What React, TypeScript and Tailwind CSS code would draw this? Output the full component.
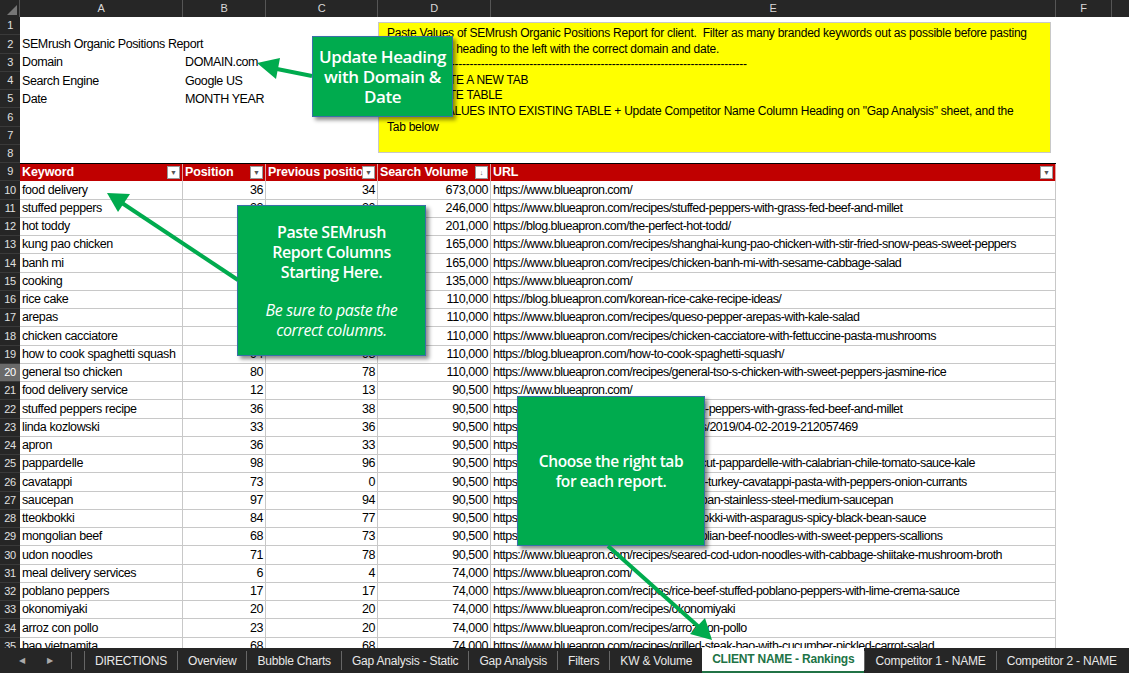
import React from "react";

const cols = [
  { l: "A", w: 163 },
  { l: "B", w: 83 },
  { l: "C", w: 112 },
  { l: "D", w: 113 },
  { l: "E", w: 565 },
  { l: "F", w: 56 },
];

const data: [string, string, string, string, string][] = [
  ["food delivery", "36", "34", "673,000", "https://www.blueapron.com/"],
  ["stuffed peppers", "22", "20", "246,000", "https://www.blueapron.com/recipes/stuffed-peppers-with-grass-fed-beef-and-millet"],
  ["hot toddy", "18", "17", "201,000", "https://blog.blueapron.com/the-perfect-hot-todd/"],
  ["kung pao chicken", "41", "39", "165,000", "https://www.blueapron.com/recipes/shanghai-kung-pao-chicken-with-stir-fried-snow-peas-sweet-peppers"],
  ["banh mi", "52", "48", "165,000", "https://www.blueapron.com/recipes/chicken-banh-mi-with-sesame-cabbage-salad"],
  ["cooking", "60", "58", "135,000", "https://www.blueapron.com/"],
  ["rice cake", "27", "25", "110,000", "https://blog.blueapron.com/korean-rice-cake-recipe-ideas/"],
  ["arepas", "44", "40", "110,000", "https://www.blueapron.com/recipes/queso-pepper-arepas-with-kale-salad"],
  ["chicken cacciatore", "38", "35", "110,000", "https://www.blueapron.com/recipes/chicken-cacciatore-with-fettuccine-pasta-mushrooms"],
  ["how to cook spaghetti squash", "94", "93", "110,000", "https://blog.blueapron.com/how-to-cook-spaghetti-squash/"],
  ["general tso chicken", "80", "78", "110,000", "https://www.blueapron.com/recipes/general-tso-s-chicken-with-sweet-peppers-jasmine-rice"],
  ["food delivery service", "12", "13", "90,500", "https://www.blueapron.com/"],
  ["stuffed peppers recipe", "36", "38", "90,500", "https://www.blueapron.com/recipes/stuffed-peppers-with-grass-fed-beef-and-millet"],
  ["linda kozlowski", "33", "36", "90,500", "https://www.blueapron.com/press-releases/2019/04-02-2019-212057469"],
  ["apron", "36", "33", "90,500", "https://www.blueapron.com/"],
  ["pappardelle", "98", "96", "90,500", "https://www.blueapron.com/recipes/fresh-cut-pappardelle-with-calabrian-chile-tomato-sauce-kale"],
  ["cavatappi", "73", "0", "90,500", "https://www.blueapron.com/recipes/spiced-turkey-cavatappi-pasta-with-peppers-onion-currants"],
  ["saucepan", "97", "94", "90,500", "https://www.blueapron.com/products/usa-pan-stainless-steel-medium-saucepan"],
  ["tteokbokki", "84", "77", "90,500", "https://www.blueapron.com/recipes/tteokbokki-with-asparagus-spicy-black-bean-sauce"],
  ["mongolian beef", "68", "73", "90,500", "https://www.blueapron.com/recipes/mongolian-beef-noodles-with-sweet-peppers-scallions"],
  ["udon noodles", "71", "78", "90,500", "https://www.blueapron.com/recipes/seared-cod-udon-noodles-with-cabbage-shiitake-mushroom-broth"],
  ["meal delivery services", "6", "4", "74,000", "https://www.blueapron.com/"],
  ["poblano peppers", "17", "17", "74,000", "https://www.blueapron.com/recipes/rice-beef-stuffed-poblano-peppers-with-lime-crema-sauce"],
  ["okonomiyaki", "20", "20", "74,000", "https://www.blueapron.com/recipes/okonomiyaki"],
  ["arroz con pollo", "23", "20", "74,000", "https://www.blueapron.com/recipes/arroz-con-pollo"],
  ["bao vietnamita", "68", "68", "74,000", "https://www.blueapron.com/recipes/grilled-steak-bao-with-cucumber-pickled-carrot-salad"],
];

const tabs = ["DIRECTIONS", "Overview", "Bubble Charts", "Gap Analysis - Static", "Gap Analysis", "Filters", "KW & Volume", "CLIENT NAME - Rankings", "Competitor 1 - NAME", "Competitor 2 - NAME"];

const font = { fontFamily: "'Liberation Sans', Arial, sans-serif" };
const cfont = { fontFamily: "'Open Sans', 'Noto Sans', sans-serif" };

function RowNum({ n, active }: { n: number; active?: boolean }) {
  return (
    <div className={`w-[20px] shrink-0 flex items-center justify-center text-[11px] border-b border-[#3a3a3a] ${active ? "bg-[#6a6a6a] text-white" : "bg-[#262626] text-[#e0e0e0]"}`}>{n}</div>
  );
}

function Filter({ sort }: { sort?: boolean }) {
  return (
    <span className="absolute right-[2px] top-[2px] w-[13px] h-[13px] bg-white border border-[#999] flex items-center justify-center text-[7px] text-[#555] leading-none">
      {sort ? "↓" : "▼"}
    </span>
  );
}

export default function App() {
  const rh = "h-[18.25px]";
  return (
    <div className="w-[1129px] h-[673px] bg-white flex flex-col overflow-hidden relative text-[12.5px] text-black tracking-[-0.4px]" style={font}>
      <div className="flex h-[17px] bg-[#262626] text-[#d8d8d8] text-[11px] shrink-0">
        <div className="w-[20px] border-r border-[#555] relative">
          <svg className="absolute right-[2px] bottom-[2px]" width="10" height="10"><polygon points="10,0 10,10 0,10" fill="#777" /></svg>
        </div>
        {cols.map((c) => (
          <div key={c.l} style={{ width: c.w }} className="border-r border-[#555] flex items-center justify-center">{c.l}</div>
        ))}
        <div className="flex-1" />
      </div>

      <div className="flex-1 overflow-hidden">
        <div className="flex relative">
          <div className="flex flex-col">
            {[1, 2, 3, 4, 5, 6, 7, 8].map((n) => (
              <div key={n} className={`flex ${rh}`}><RowNum n={n} /></div>
            ))}
          </div>
          <div className="flex flex-col">
            {[
              ["", ""],
              ["SEMrush Organic Positions Report", ""],
              ["Domain", "DOMAIN.com"],
              ["Search Engine", "Google US"],
              ["Date", "MONTH YEAR"],
              ["", ""],
              ["", ""],
              ["", ""],
            ].map(([a, b], i) => (
              <div key={i} className={`flex ${rh} items-center`}>
                <div className="w-[163px] pl-[2px] whitespace-nowrap">{a}</div>
                <div className="w-[83px] pl-[2px] whitespace-nowrap">{b}</div>
              </div>
            ))}
          </div>
          <div className="ml-[112px] mt-[5px] w-[673px] h-[131px] bg-[#ffff00] border border-[#c8c8c8] px-[8px] pt-[3px] text-[12px] leading-[15.6px] tracking-[-0.25px]">
            <div className="whitespace-nowrap">Paste Values of SEMrush Organic Positions Report for client.&nbsp; Filter as many branded keywords out as possible before pasting</div>
            <div>+ Update the heading to the left with the correct domain and date.</div>
            <div className="overflow-hidden whitespace-nowrap w-[360px]">{"-".repeat(120)}</div>
            <div>1. DUPLICATE A NEW TAB</div>
            <div>2. COMPLETE TABLE</div>
            <div className="whitespace-nowrap">3. PASTE VALUES INTO EXISTING TABLE + Update Competitor Name Column Heading on "Gap Analysis" sheet, and the</div>
            <div>Tab below</div>
          </div>
        </div>

        <div className={`flex ${rh}`}>
          <RowNum n={9} />
          <div className="flex bg-[#c00000] text-white font-bold border-t border-black">
            {["Keyword", "Position", "Previous position", "Search Volume", "URL"].map((h, i) => (
              <div key={h} style={{ width: cols[i].w }} className="relative pl-[2px] border-r border-[#e0a0a0] overflow-hidden whitespace-nowrap flex items-center tracking-[-0.1px]">
                {h}
                <Filter sort={i === 3} />
              </div>
            ))}
          </div>
        </div>

        {data.map((r, i) => (
          <div key={i} className={`flex ${rh}`}>
            <RowNum n={i + 10} active={i + 10 === 20} />
            <div className="flex border-b border-[#c8c8c8]">
              <div style={{ width: 163 }} className="pl-[2px] border-r border-[#c8c8c8] whitespace-nowrap overflow-hidden flex items-center">{r[0]}</div>
              <div style={{ width: 83 }} className="pr-[2px] border-r border-[#c8c8c8] flex items-center justify-end">{r[1]}</div>
              <div style={{ width: 112 }} className="pr-[2px] border-r border-[#c8c8c8] flex items-center justify-end">{r[2]}</div>
              <div style={{ width: 113 }} className="pr-[2px] border-r border-[#c8c8c8] flex items-center justify-end">{r[3]}</div>
              <div style={{ width: 565 }} className="pl-[2px] border-r border-[#c8c8c8] whitespace-nowrap overflow-hidden flex items-center tracking-[-0.55px]">{r[4]}</div>
            </div>
          </div>
        ))}
      </div>

      <div className="h-[25px] shrink-0 bg-[#262626] flex items-stretch text-[12px] text-[#e8e8e8] whitespace-nowrap overflow-hidden tracking-[-0.2px]" style={font}>
        <div className="w-[72px] shrink-0 flex items-center justify-center gap-[22px] text-[8px] text-[#aaa] border-r border-[#666] my-[4px]">
          <span>◀</span><span>▶</span>
        </div>
        <div className="w-[12px] shrink-0" />
        {tabs.map((t) => {
          const act = t === "CLIENT NAME - Rankings";
          return act ? (
            <div key={t} className="shrink-0 px-[10px] bg-white text-[#217346] font-bold flex items-center border-b-2 border-[#217346] -mt-[1px]">{t}</div>
          ) : (
            <div key={t} className="shrink-0 px-[10px] flex items-center border-l border-[#666] my-[3px]">{t}</div>
          );
        })}
      </div>

      <div className="absolute left-[312px] top-[36px] w-[141px] h-[81px] bg-[#00ab4e] border border-[#3a6fa8] shadow-[3px_3px_4px_rgba(0,0,0,0.45)] text-white text-[17px] font-semibold leading-[20px] flex items-center justify-center text-center" style={cfont}>
        Update Heading with Domain &amp; Date
      </div>
      <div className="absolute left-[237px] top-[205px] w-[189px] h-[151px] bg-[#00ab4e] border border-[#3a6fa8] shadow-[3px_3px_4px_rgba(0,0,0,0.45)] text-white text-[16px] leading-[20px] flex flex-col items-center justify-center text-center" style={cfont}>
        <div className="font-semibold">Paste SEMrush<br />Report Columns<br />Starting Here.</div>
        <div className="italic mt-[18px]">Be sure to paste the<br />correct columns.</div>
      </div>
      <div className="absolute left-[517px] top-[396px] w-[188px] h-[150px] bg-[#00ab4e] border border-[#3a6fa8] shadow-[3px_3px_4px_rgba(0,0,0,0.45)] text-white text-[15.5px] font-semibold leading-[20px] flex items-center justify-center text-center" style={cfont}>
        Choose the right tab<br />for each report.
      </div>

      <svg className="absolute left-0 top-0 pointer-events-none" width="1129" height="673">
        <g stroke="#00ab4e" strokeWidth="4" fill="#00ab4e">
          <line x1="312" y1="76" x2="272" y2="68" />
          <polygon points="257,63 280,58 276,79" stroke="none" />
          <line x1="238" y1="280" x2="122" y2="203" />
          <polygon points="107,193 130,194 118,212" stroke="none" />
          <line x1="608" y1="546" x2="700" y2="628" />
          <polygon points="712,640 690,634 705,618" stroke="none" />
        </g>
      </svg>
    </div>
  );
}
